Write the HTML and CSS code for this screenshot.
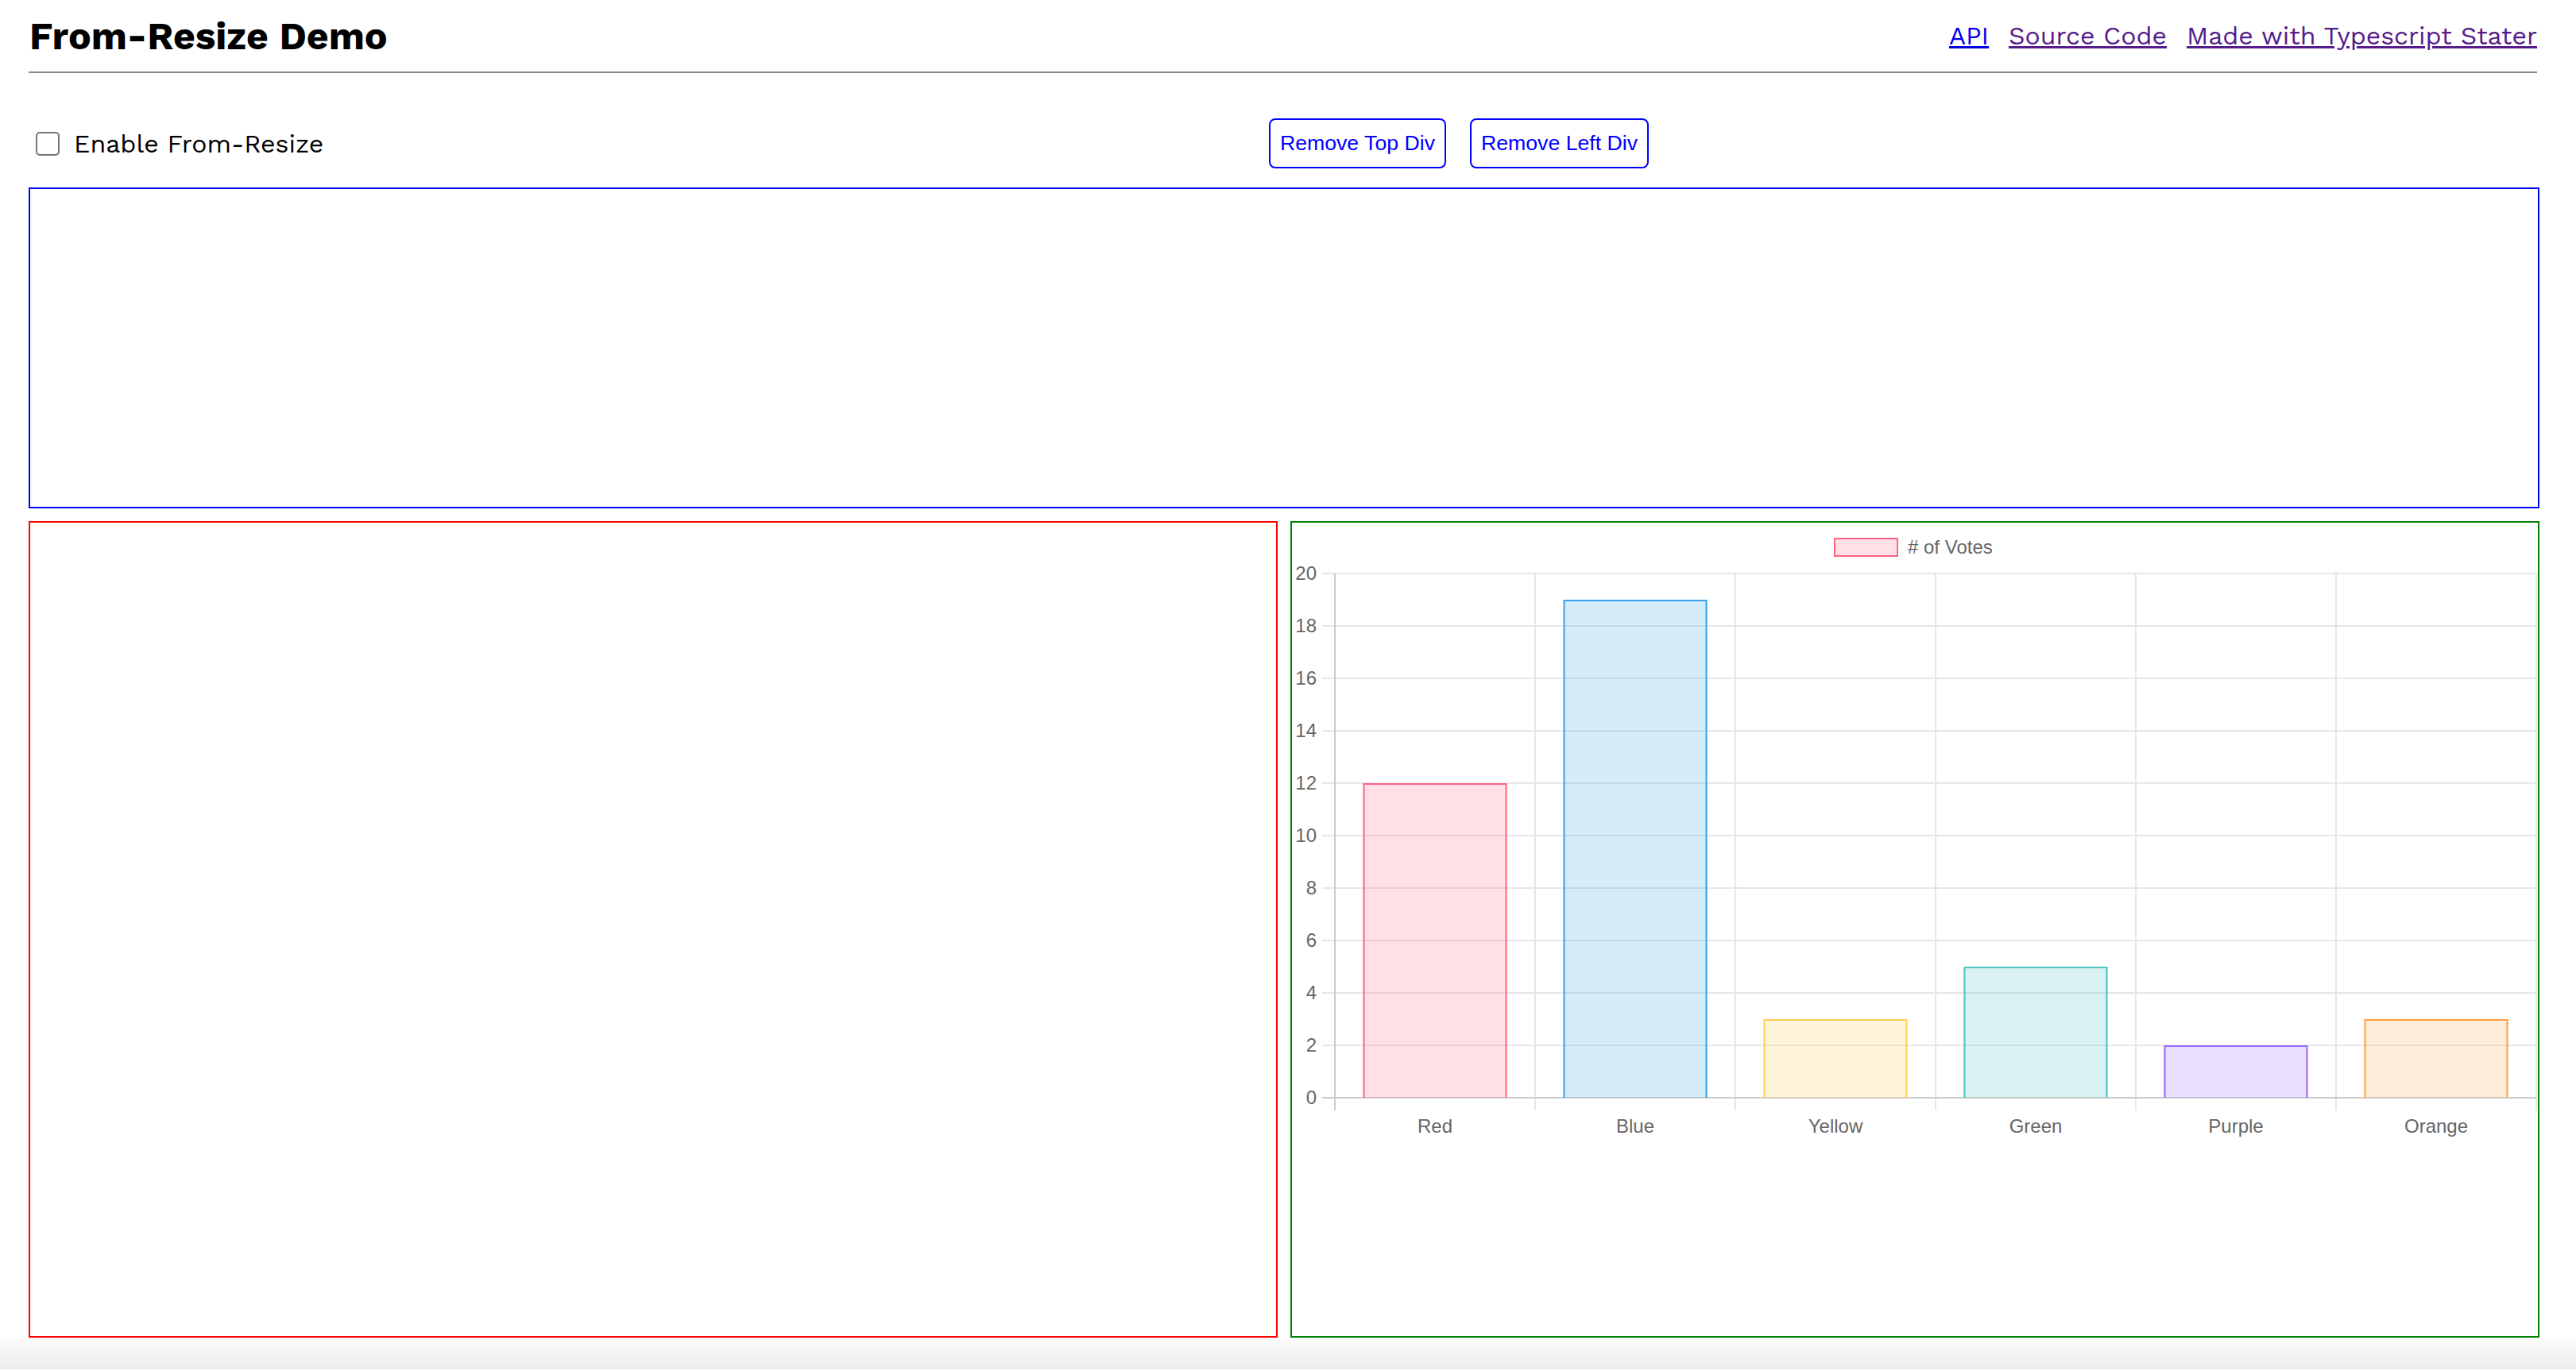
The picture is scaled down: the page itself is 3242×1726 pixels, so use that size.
FILE: index.html
```html
<!DOCTYPE html>
<html lang="en">
<head>
    <meta charset="UTF-8">
    <meta name="viewport" content="width=device-width, initial-scale=1.0">
    <title>From-Resize Demo</title>
    <link rel="stylesheet" href="styles.css">
</head>
<body>
    <div class="page">
        <header class="topbar">
            <h1 class="title">From-Resize Demo</h1>
            <nav class="links">
                <a href="#" class="fresh">API</a>
                <a href="#">Source Code</a>
                <a href="#">Made with Typescript Stater</a>
            </nav>
        </header>

        <div class="controls">
            <label class="toggle"><input type="checkbox"> Enable From-Resize</label>
            <div class="actions">
                <button>Remove Top Div</button>
                <button>Remove Left Div</button>
            </div>
        </div>

        <div class="top-div"></div>

        <div class="split">
            <div class="left-div"></div>
            <div class="right-div">
                <svg class="chart" width="1568" height="784" viewBox="0 0 1568 784">
                    <!-- legend -->
                    <rect x="683" y="20" width="79" height="22" fill="rgba(255,99,132,0.2)" stroke="rgb(255,99,132)" stroke-width="2"/>
                    <text x="775" y="39"># of Votes</text>

                    <!-- grid -->
                    <g stroke="#e6e6e6" stroke-width="2">
                        <line x1="38" y1="64" x2="1566" y2="64"/>
                        <line x1="38" y1="130" x2="1566" y2="130"/>
                        <line x1="38" y1="196" x2="1566" y2="196"/>
                        <line x1="38" y1="262" x2="1566" y2="262"/>
                        <line x1="38" y1="328" x2="1566" y2="328"/>
                        <line x1="38" y1="394" x2="1566" y2="394"/>
                        <line x1="38" y1="460" x2="1566" y2="460"/>
                        <line x1="38" y1="526" x2="1566" y2="526"/>
                        <line x1="38" y1="592" x2="1566" y2="592"/>
                        <line x1="38" y1="658" x2="1566" y2="658"/>
                        <line x1="306" y1="64" x2="306" y2="740"/>
                        <line x1="558" y1="64" x2="558" y2="740"/>
                        <line x1="810" y1="64" x2="810" y2="740"/>
                        <line x1="1062" y1="64" x2="1062" y2="740"/>
                        <line x1="1314" y1="64" x2="1314" y2="740"/>
                        <line x1="1566" y1="64" x2="1566" y2="740"/>
                    </g>
                    <g stroke="#cccccc" stroke-width="2">
                        <line x1="38" y1="724" x2="1566" y2="724"/>
                        <line x1="54" y1="64" x2="54" y2="740"/>
                    </g>

                    <!-- bars -->
                    <rect x="89.5" y="328" width="181" height="396" fill="rgba(255,99,132,0.2)"/>
                    <path d="M90.5 724V329H269.5V724" fill="none" stroke="rgb(255,99,132)" stroke-width="2"/>
                    <rect x="341.5" y="97" width="181" height="627" fill="rgba(54,162,235,0.2)"/>
                    <path d="M342.5 724V98H521.5V724" fill="none" stroke="rgb(54,162,235)" stroke-width="2"/>
                    <rect x="593.5" y="625" width="181" height="99" fill="rgba(255,206,86,0.2)"/>
                    <path d="M594.5 724V626H773.5V724" fill="none" stroke="rgb(255,206,86)" stroke-width="2"/>
                    <rect x="845.5" y="559" width="181" height="165" fill="rgba(75,192,192,0.2)"/>
                    <path d="M846.5 724V560H1025.5V724" fill="none" stroke="rgb(75,192,192)" stroke-width="2"/>
                    <rect x="1097.5" y="658" width="181" height="66" fill="rgba(153,102,255,0.2)"/>
                    <path d="M1098.5 724V659H1277.5V724" fill="none" stroke="rgb(153,102,255)" stroke-width="2"/>
                    <rect x="1349.5" y="625" width="181" height="99" fill="rgba(255,159,64,0.2)"/>
                    <path d="M1350.5 724V626H1529.5V724" fill="none" stroke="rgb(255,159,64)" stroke-width="2"/>

                    <!-- y ticks -->
                    <g class="y-ticks">
                        <text x="31" y="72">20</text>
                        <text x="31" y="138">18</text>
                        <text x="31" y="204">16</text>
                        <text x="31" y="270">14</text>
                        <text x="31" y="336">12</text>
                        <text x="31" y="402">10</text>
                        <text x="31" y="468">8</text>
                        <text x="31" y="534">6</text>
                        <text x="31" y="600">4</text>
                        <text x="31" y="666">2</text>
                        <text x="31" y="732">0</text>
                    </g>

                    <!-- x ticks -->
                    <g class="x-ticks">
                        <text x="180" y="768">Red</text>
                        <text x="432" y="768">Blue</text>
                        <text x="684" y="768">Yellow</text>
                        <text x="936" y="768">Green</text>
                        <text x="1188" y="768">Purple</text>
                        <text x="1440" y="768">Orange</text>
                    </g>
                </svg>
            </div>
        </div>
    </div>
    <div class="shade"></div>
</body>
</html>
```

FILE: styles.css
```css
body {
    margin: 0;
    font-family: "Work Sans", Inter, "Open Sans", sans-serif;
    background: #fff;
    color: #000;
}

.page {
    padding: 0 46px 0 36px;
}

.topbar {
    display: flex;
    justify-content: space-between;
    align-items: center;
    height: 90px;
    margin-right: 3px;
    border-bottom: 2px solid #888;
}

.title {
    margin: 0 0 0 1px;
    font-size: 48px;
    font-weight: 700;
}

.links {
    display: flex;
    gap: 25px;
    font-size: 32px;
}

.links a {
    color: #551a8b;
}

.links a.fresh {
    color: #0000ee;
}

.controls {
    display: flex;
    align-items: center;
    height: 63px;
    margin: 57px 0 24px;
}

.toggle {
    display: flex;
    align-items: center;
    gap: 18px;
    min-width: 440px;
    font-size: 32px;
}

.toggle input {
    appearance: none;
    width: 30px;
    height: 30px;
    margin: 0 0 0 9px;
    border: 2px solid #767676;
    border-radius: 5px;
    background: #fff;
}

.actions {
    flex: 1;
    display: flex;
    justify-content: center;
    gap: 30px;
}

.actions button {
    height: 63px;
    padding: 0 12px;
    border: 2px solid #0000ff;
    border-radius: 8px;
    background: #fff;
    color: #0000ff;
    font-family: "Liberation Sans", Arial, sans-serif;
    font-size: 26.67px;
}

.top-div {
    height: 400px;
    border: 2px solid #0000ff;
    margin-bottom: 16px;
}

.split {
    display: grid;
    grid-template-columns: 1fr 1fr;
    gap: 16px;
}

.left-div {
    height: 1024px;
    border: 2px solid #ff0000;
}

.right-div {
    height: 1024px;
    border: 2px solid #008000;
}

.chart {
    display: block;
}

.chart text {
    font-family: "Liberation Sans", Arial, sans-serif;
    font-size: 24px;
    fill: #666;
}

.y-ticks text {
    text-anchor: end;
}

.x-ticks text {
    text-anchor: middle;
}

.shade {
    height: 40px;
    background: linear-gradient(#fbfbfb, #ececec);
}
```
